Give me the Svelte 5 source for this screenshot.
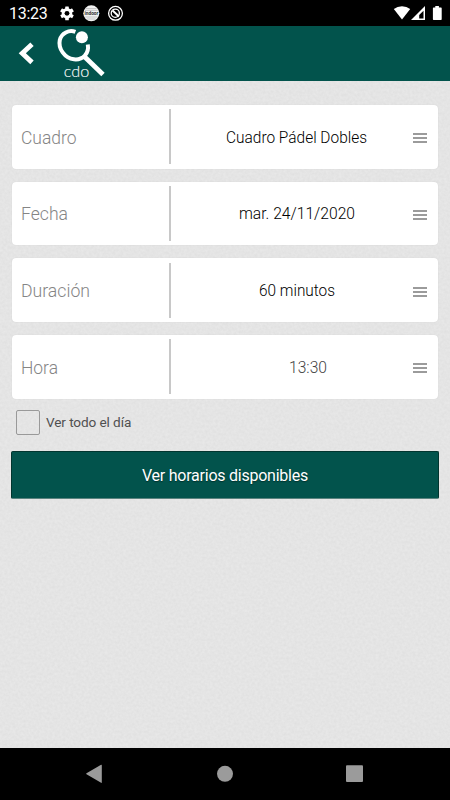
<script>
  const fields = [
    { label: 'Cuadro', value: 'Cuadro Pádel Dobles', width: 141, labelWidth: 55.5 },
    { label: 'Fecha', value: 'mar. 24/11/2020', width: 116, labelWidth: 47 },
    { label: 'Duración', value: '60 minutos', width: 76, labelWidth: 69 },
    { label: 'Hora', value: '13:30', width: 38, labelWidth: 37, soft: true }
  ];
  let allDay = $state(false);
</script>

<div class="screen">
  <div class="status">
    <span class="clock">13:23</span>
    <svg class="left-icons" width="66" height="26" viewBox="58 0 66 26">
      <g fill="#fff">
        <circle cx="67" cy="13.3" r="5.2" />
        {#each [0, 60, 120, 180, 240, 300] as a}
          <rect x="65.2" y="6.4" width="3.6" height="4" rx=".5" transform="rotate({a} 67 13.3)" />
        {/each}
      </g>
      <circle cx="67" cy="13.3" r="2.4" fill="#000" />
      <circle cx="91.3" cy="13.3" r="8" fill="#f2f2f2" />
      <path d="M85 10.3h12.5M86 8.5h10.5M85.3 17h12M87 19h8.6" stroke="#aaa" stroke-width=".6" />
      <text x="84.4" y="15.3" font-size="5" font-weight="700" textLength="14" lengthAdjust="spacingAndGlyphs" fill="#333">indoor</text>
      <circle cx="115.5" cy="13.3" r="6.9" fill="none" stroke="#fff" stroke-width="1.3" />
      <circle cx="115.300" cy="13.200" r="4.100" fill="none" stroke="#fff" stroke-width="1.3" />
      <path d="M112.600 10.500l6.300 6" stroke="#fff" stroke-width="2" />
    </svg>
    <svg class="right-icons" width="56" height="26" viewBox="392 0 56 26">
      <path d="M402 19.4L393.800 9q3.600-2.800 8.200-2.800T410.200 9z" fill="#fff" />
      <path d="M425 6v14h-14z" fill="#fff" />
      <path d="M423.500 10.800v7.700h-4.300v-3.400z" fill="#000" />
      <path d="M435.300 6h3.600v1.500h2.100q.7 0 .7.700v11q0 .8-.7.800h-7.400q-.7 0-.7-.8v-11q0-.7.700-.7h1.700z" fill="#fff" />
    </svg>
  </div>

  <header>
    <svg width="120" height="55" viewBox="0 26 120 55">
      <path d="M32 44.300L22.300 53.300 32 62.400" fill="none" stroke="#fff" stroke-width="4.900" />
      <path d="M75.400 31.900C69 29.500 61.500 33 59.800 40C58 48.500 64.500 58.200 74 59.300C83 60.200 89.300 53.500 87.800 44.500" fill="none" stroke="#fff" stroke-width="4" />
      <path d="M83.800 56L103 74.500" stroke="#fff" stroke-width="4.800" />
      <circle cx="81.900" cy="37.200" r="6" fill="#fff" />
      <text class="brand" x="63.800" y="77.300" textLength="25.500" lengthAdjust="spacingAndGlyphs">cdo</text>
    </svg>
  </header>

  <main>
    <svg class="paper" width="450" height="667" aria-hidden="true">
      <filter id="grain" x="0" y="0" width="100%" height="100%" color-interpolation-filters="sRGB">
        <feTurbulence type="fractalNoise" baseFrequency=".38" numOctaves="2" seed="7" />
        <feColorMatrix values=".045 0 0 0 .873  .045 0 0 0 .873  .045 0 0 0 .873  0 0 0 0 1" />
      </filter>
      <rect width="450" height="667" filter="url(#grain)" />
    </svg>
    <div class="form">
      {#each fields as f}
        <div class="card">
          <span class="label">
            <svg width="90" height="24">
              <text x="0" y="18.700" textLength={f.labelWidth} lengthAdjust="spacingAndGlyphs">{f.label}</text>
            </svg>
          </span>
          <span class="divider"></span>
          <span class="value" class:soft={f.soft}>
            <svg width={f.width + 4} height="24">
              <text x="2" y="17.800" textLength={f.width} lengthAdjust="spacingAndGlyphs">{f.value}</text>
            </svg>
          </span>
          <span class="menu"><i></i><i></i><i></i></span>
        </div>
      {/each}
      <label class="check">
        <input type="checkbox" bind:checked={allDay} />
        <span>Ver todo el día</span>
      </label>
      <button>Ver horarios disponibles</button>
    </div>
  </main>

  <nav>
    <svg width="450" height="52" viewBox="0 748 450 52" fill="#9b9b9b">
      <path d="M101.800 765.200v17.200q0 .7-.7.400l-14.600-8.500q-.8-.5 0-1l14.600-8.500q.7-.3.700.4z" />
      <circle cx="225" cy="773.800" r="8" />
      <rect x="346" y="765.300" width="17" height="16.800" rx="1" />
    </svg>
  </nav>
</div>

<style>
  :global(body) { margin: 0; background: #000; }
  .screen {
    width: 450px; height: 800px; display: flex; flex-direction: column;
    overflow: hidden; font-family: Roboto, sans-serif; background: #e4e4e4;
  }
  .status { height: 26px; background: #000; display: flex; align-items: center; flex: none; }
  .clock { color: #fff; font-size: 16px; line-height: 26px; width: 49px; padding: 2px 0 0 9px; box-sizing: content-box; letter-spacing: -.3px; }
  .right-icons { margin-left: auto; margin-right: 2px; }
  svg { display: block; flex: none; overflow: visible; }
  header { height: 55px; background: #02534c; flex: none; }
  .brand { font: 300 15px Lato, sans-serif; fill: #fff; stroke: #fff; stroke-width: .1; }
  main { flex: 1; position: relative; border-bottom: 1px solid #aaa; box-sizing: border-box; }
  .paper { position: absolute; inset: 0; overflow: hidden; }
  .form { position: relative; padding: 24px 11px 0 12px; display: flex; flex-direction: column; }
  .card {
    height: 63.600px; margin-bottom: 13.070px; width: 426px; border-radius: 4px;
    background: #fff; display: flex; align-items: center; box-shadow: 0 0 1px #ccc;
  }
  .label { width: 148.400px; padding-left: 9px; }
  .label text { font-size: 17.700px; font-weight: 300; fill: #858585; }
  .divider { width: 1.500px; height: 55px; background: #c8c8c8; }
  .value { flex: 1; display: flex; justify-content: center; padding-left: 10px; }
  .value text { font-size: 15.600px; font-weight: 300; fill: #000; }
  .value.soft { padding-left: 32px; }
  .value.soft text { fill: #444; }
  .menu { width: 14px; margin: 3px 11px 0 0; display: flex; flex-direction: column; gap: 2px; }
  .menu i { height: 2px; background: #9b9b9b; }
  .check { display: flex; align-items: center; height: 25px; margin: -1.700px 0 0 4px; font-size: 13.600px; letter-spacing: -.1px; color: #505050; }
  .check input { appearance: none; box-sizing: border-box; width: 24px; height: 25px; margin: 0 6px 0 0; border: 1.500px solid #999; border-radius: 2px; background: transparent; }
  button {
    width: 428px; height: 48px; margin: 16px 0 0 -1px; padding: 2px 0 0; border: 1px solid #02352f;
    border-bottom-color: #5a837f; border-radius: 2px; background: #02534c; color: #fff;
    font: 400 16px Roboto, sans-serif; letter-spacing: -.24px; text-shadow: 0 1px 1px #00332e;
  }
  nav { height: 52px; background: #000; flex: none; }
</style>
